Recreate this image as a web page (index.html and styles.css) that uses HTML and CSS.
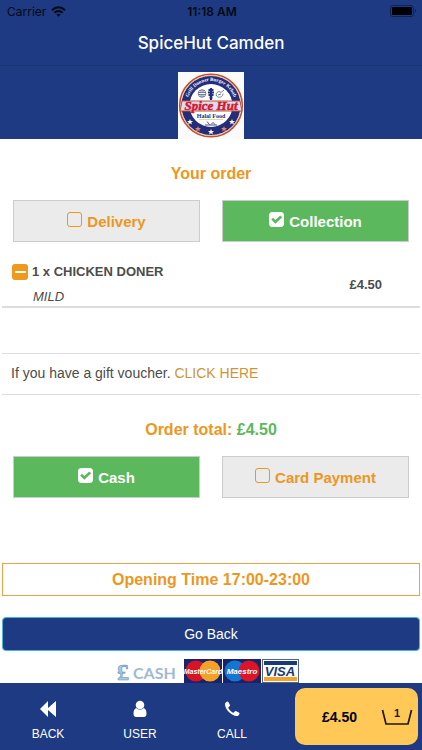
FILE: index.html
```html
<!DOCTYPE html>
<html lang="en">
<head>
    <meta charset="UTF-8">
    <meta name="viewport" content="width=device-width, initial-scale=1.0">
    <title>SpiceHut Camden</title>
    <link rel="stylesheet" href="styles.css">
</head>
<body>
    <!-- Status bar and title -->
    <header class="top-bar">
        <div class="status-bar">
            <span class="carrier">Carrier
                <svg width="15" height="11" viewBox="0 0 15 11" aria-hidden="true">
                    <g fill="none" stroke="#050914" stroke-width="2">
                        <path d="M1 4.2C4.8.4 10.2.4 14 4.2"/>
                        <path d="M3.4 6.8C5.8 4.5 9.2 4.5 11.6 6.8"/>
                    </g>
                    <path d="M5.4 8.6C6.7 7.5 8.3 7.5 9.6 8.6L7.5 10.8Z" fill="#050914"/>
                </svg>
            </span>
            <span class="clock">11:18 AM</span>
            <svg class="battery" width="27" height="12" viewBox="0 0 27 12" aria-hidden="true">
                <rect x=".5" y=".5" width="23" height="11" rx="2.5" fill="none" stroke="#10214d"/>
                <rect x="2" y="2" width="20" height="8" rx="1" fill="#000"/>
                <path d="M25 4C26.5 4.5 26.5 7.5 25 8Z" fill="#10214d"/>
            </svg>
        </div>
        <h1 class="title">SpiceHut Camden</h1>
    </header>

    <div class="banner">
        <svg class="logo" width="66" height="67" viewBox="0 0 66 67" role="img" aria-label="Spice Hut">
            <defs>
                <path id="arc" d="M9 33A24 24 0 0 1 57 33"/>
                <path id="star" d="M0-3L.8-.9 3-.9 1.3.5 1.9 2.6 0 1.3-1.9 2.6-1.3.5-3-.9-.8-.9Z"/>
            </defs>
            <rect width="66" height="67" fill="#fafafa"/>
            <circle cx="33" cy="33.5" r="31.3" fill="#fff" stroke="#c2512f" stroke-width="1.6"/>
            <circle cx="33" cy="33.5" r="30" fill="#232d7c" stroke="#f0c9a8" stroke-width="1"/>
            <circle cx="33" cy="33.5" r="21.5" fill="#fff"/>
            <text class="logo-arc"><textPath href="#arc" startOffset="50%" text-anchor="middle">Grill Donner Burger Kebab</textPath></text>
            <!-- burger, doner, chicken -->
            <g fill="none" stroke="#555a80" stroke-width=".8">
                <circle cx="24" cy="21.5" r="3.8"/>
                <path d="M20.5 20.5h7M20.5 22.5h7M22 19h4M22 24h4"/>
                <path d="M38.5 24C37 20.5 41 18.5 43 20.5L46 18M38.5 24C41 26.5 45 25 45 21.5M40 23l3-1"/>
            </g>
            <path d="M33 16v12M30.5 18h5M30 20.5h6M30.5 23h5M31.5 25.5h3" stroke="#232d7c" stroke-width="2.2"/>
            <path d="M4 29H62L64 39H2Z" fill="#e0daf0" stroke="#c2512f" stroke-width="1"/>
            <text class="logo-name" x="33" y="38" text-anchor="middle">Spice Hut</text>
            <text class="logo-sub" x="33" y="46" text-anchor="middle">Halal Food</text>
            <path d="M21 47.5H45" stroke="#d8d084" stroke-width=".8"/>
            <path d="M27 53H39M29 49.5L31.5 52.5M33 52.5L35 50.5 37 52.5" fill="none" stroke="#333a70" stroke-width=".9"/>
            <g fill="#fff">
                <use href="#star" x="12" y="50"/>
                <use href="#star" x="54" y="50"/>
                <use href="#star" x="33" y="60"/>
            </g>
            <g fill="#e88365">
                <use href="#star" x="20" y="57"/>
                <use href="#star" x="46" y="57"/>
            </g>
        </svg>
    </div>

    <main class="content">
        <h2 class="heading">Your order</h2>
        <div class="choices">
            <label class="choice"><input type="radio" name="service"> Delivery</label>
            <label class="choice"><input type="radio" name="service" checked> Collection</label>
        </div>

        <!-- Ordered items -->
        <div class="item">
            <button class="remove" aria-label="Remove CHICKEN DONER"></button>
            <div class="item-text">
                <div class="item-name">1 x CHICKEN DONER</div>
                <div class="item-note">MILD</div>
            </div>
            <div class="item-price">£4.50</div>
        </div>

        <p class="voucher">If you have a gift voucher. <a href="#voucher">CLICK HERE</a></p>

        <h2 class="heading">Order total: <span class="amount">£4.50</span></h2>
        <div class="choices">
            <label class="choice"><input type="radio" name="payment" checked> Cash</label>
            <label class="choice"><input type="radio" name="payment"> Card Payment</label>
        </div>

        <div class="opening">Opening Time 17:00-23:00</div>
        <button class="go-back">Go Back</button>

        <!-- Accepted payments -->
        <div class="payments">
            <svg width="64" height="24" viewBox="0 0 64 24" role="img" aria-label="Cash">
                <text class="pound" x="1" y="21">£</text>
                <text class="cash" x="17" y="20">CASH</text>
            </svg>
            <svg width="38" height="24" viewBox="0 0 38 24" role="img" aria-label="MasterCard">
                <rect width="38" height="24" fill="#17246b"/>
                <circle cx="12" cy="12" r="10.5" fill="#d5142a"/>
                <circle cx="26" cy="12" r="10.5" fill="#f7a028"/>
                <text class="card-name" x="19" y="15" text-anchor="middle">MasterCard</text>
            </svg>
            <svg width="38" height="24" viewBox="0 0 38 24" role="img" aria-label="Maestro">
                <rect width="38" height="24" fill="#17246b"/>
                <circle cx="12" cy="12" r="10.5" fill="#1377d2"/>
                <circle cx="26" cy="12" r="10.5" fill="#dc1428"/>
                <text class="card-name maestro" x="19" y="15" text-anchor="middle">Maestro</text>
            </svg>
            <svg width="37" height="24" viewBox="0 0 37 24" role="img" aria-label="VISA">
                <rect x=".5" y=".5" width="36" height="23" fill="#fff" stroke="#526383"/>
                <rect x="2" y="2" width="33" height="4" fill="#183a78"/>
                <rect x="2" y="18" width="33" height="4" fill="#f4a22c"/>
                <text class="visa" x="18" y="17" text-anchor="middle">VISA</text>
            </svg>
        </div>
    </main>

    <!-- Bottom navigation -->
    <nav class="bottom-bar">
        <a class="nav-link" href="#back">
            <svg width="18" height="18" viewBox="0 0 18 18" fill="#fff" aria-hidden="true"><path d="M1 9L9 1V8L17 1V17L9 10V17Z"/></svg>
            BACK
        </a>
        <a class="nav-link" href="#user">
            <svg width="18" height="18" viewBox="0 0 18 18" fill="#fff" aria-hidden="true">
                <circle cx="9" cy="5" r="4.3"/>
                <path d="M5.3 8C7.3 10.2 10.7 10.2 12.7 8C15 8.8 15.5 11.5 15.5 14C15.5 16 14.5 17 12.8 17H5.2C3.5 17 2.5 16 2.5 14C2.5 11.5 3 8.8 5.3 8Z"/>
            </svg>
            USER
        </a>
        <a class="nav-link" href="#call">
            <svg width="18" height="18" viewBox="0 0 18 18" fill="#fff" aria-hidden="true">
                <path d="M2 4.3C2 2.7 3.2 1.8 4.6 1.5C5.2 1.4 5.5 2 7 5.2C7.3 6.2 5.4 6.8 5.3 7.7C5.6 9.2 8.8 12.4 10.3 12.7C11.2 12.7 11.9 10.7 12.8 11C16 12.5 16.6 12.9 16.5 13.4C16.3 14.9 15.3 16 13.7 16C8.5 16 2 9.5 2 4.3Z"/>
            </svg>
            CALL
        </a>
        <button class="basket">
            <span>£4.50</span>
            <svg width="32" height="22" viewBox="0 0 32 22" aria-hidden="true">
                <path d="M1.5 4L5 18H27L30.5 4" fill="none" stroke="#201805" stroke-width="1.7"/>
                <text class="count" x="16" y="11" text-anchor="middle">1</text>
            </svg>
        </button>
    </nav>
</body>
</html>
```
FILE: styles.css
```css
* {
    box-sizing: border-box;
}

body {
    font-family: "Liberation Sans", Arial, sans-serif;
    font-size: 14px;
    background-color: #fff;
    color: #4c4c4c;
    margin: 0;
    min-height: 100vh;
    display: flex;
    flex-direction: column;
}

button {
    font-family: inherit;
    cursor: pointer;
}

/* Top bar */
.top-bar {
    background-color: #1d3a82;
    border-bottom: 1px solid #1a3475;
    height: 66px;
    font-family: Inter, sans-serif;
}

.status-bar {
    display: grid;
    grid-template-columns: 1fr auto 1fr;
    align-items: center;
    height: 22px;
    padding: 0 5px 0 7px;
    color: #050914;
    font-size: 12px;
}

.carrier {
    display: flex;
    align-items: center;
    gap: 5px;
}

.clock {
    font-weight: 600;
}

.battery {
    justify-self: end;
}

.title {
    margin: 0;
    color: #fff;
    font-size: 17px;
    font-weight: 500;
    line-height: 42px;
    text-align: center;
}

.banner {
    background-color: #1d3a82;
    padding-top: 6px;
    display: flex;
    justify-content: center;
}

.logo-arc {
    font: bold 5px "Liberation Serif", serif;
    fill: #fff;
}

.logo-name {
    font: italic bold 13px "Liberation Serif", serif;
    fill: #d3182e;
    stroke: #d3182e;
    stroke-width: 0.5px;
}

.logo-sub {
    font: bold 6px "Liberation Serif", serif;
    fill: #232d7c;
}

/* Order */
.content {
    flex: 1;
    padding: 0 2px;
}

.heading {
    margin: 24px 0 15px;
    color: #ec971f;
    font-size: 16px;
    line-height: 22px;
    text-align: center;
}

.amount {
    color: #5cb85c;
}

.choices {
    display: grid;
    grid-template-columns: 1fr 1fr;
    gap: 22px;
    padding: 0 11px;
}

.choice {
    display: flex;
    align-items: center;
    justify-content: center;
    gap: 5px;
    height: 42px;
    border: 1px solid #ccc;
    background-color: #ebebeb;
    color: #ec971f;
    font-size: 15px;
    font-weight: bold;
    cursor: pointer;
}

.choice input {
    appearance: none;
    width: 15px;
    height: 15px;
    margin: 0 0 3px;
    border: 1px solid #ec971f;
    border-radius: 3px;
}

.choice:has(input:checked) {
    background-color: #5cb85c;
    color: #fff;
}

.choice input:checked {
    display: grid;
    place-items: center;
    border-color: #fff;
    background-color: #fff;
}

.choice input:checked::before {
    content: "";
    width: 11px;
    height: 9px;
    background-color: #5cb85c;
    clip-path: polygon(0 50%, 18% 30%, 38% 55%, 82% 5%, 100% 24%, 38% 96%);
}

.item {
    display: flex;
    margin-top: 17px;
    padding: 4px 38px 0 10px;
    height: 49px;
    border-bottom: 2px solid #ddd;
}

.remove {
    display: flex;
    align-items: center;
    justify-content: center;
    width: 16px;
    height: 16px;
    margin: 1px 4px 0 0;
    padding: 0;
    border: none;
    border-radius: 3px;
    background-color: #f0981c;
}

.remove::before {
    content: "";
    width: 11px;
    height: 2px;
    background-color: #fff;
}

.item-text {
    flex: 1;
    font-size: 13px;
    line-height: 18px;
}

.item-name,
.item-price {
    font-size: 13px;
    font-weight: bold;
}

.item-note {
    margin-top: 7px;
    padding-left: 1px;
    font-style: italic;
}

.item-price {
    align-self: center;
}

.voucher {
    margin: 45px 0 0;
    padding: 0 9px 2px;
    border-top: 1px solid #ddd;
    border-bottom: 1px solid #ddd;
    font-size: 14px;
    line-height: 38px;
}

.voucher a {
    color: #cc9537;
    text-decoration: none;
}

.opening {
    margin-top: 65px;
    border: 1px solid #eba345;
    color: #ec971f;
    font-size: 16px;
    font-weight: bold;
    line-height: 31px;
    text-align: center;
}

.go-back {
    display: block;
    width: 100%;
    height: 34px;
    margin-top: 21px;
    border: 1px solid #46b8da;
    border-radius: 4px;
    background-color: #1d3a82;
    color: #fff;
    font-size: 14px;
}

.payments {
    display: flex;
    justify-content: center;
    gap: 1px;
    padding: 8px 8px 0 0;
}

.payments svg:first-child {
    margin-right: 3px;
}

.pound {
    font: bold 24px "Liberation Serif", serif;
    fill: #a9c8e2;
    stroke: #6d92b5;
    stroke-width: 0.6px;
}

.cash {
    font: bold 16px Lato, sans-serif;
    fill: #a1bad2;
}

.card-name {
    font: italic bold 7px "Liberation Sans", sans-serif;
    fill: #fff;
}

.maestro {
    font-size: 8px;
}

.visa {
    font: italic bold 13px "Liberation Sans", sans-serif;
    fill: #183a78;
}

/* Bottom bar */
.bottom-bar {
    position: sticky;
    bottom: 0;
    display: flex;
    height: 67px;
    padding: 5px 4px 5px 2px;
    background-color: #1d3a82;
}

.nav-link {
    flex: 1;
    display: flex;
    flex-direction: column;
    align-items: center;
    gap: 9px;
    padding-top: 12px;
    color: #fff;
    font-size: 12px;
    line-height: 14px;
    text-decoration: none;
}

.basket {
    display: flex;
    align-items: center;
    justify-content: space-between;
    width: 123px;
    margin-left: 17px;
    padding: 0 5px 0 27px;
    border: none;
    border-radius: 10px;
    background-color: #ffc857;
    color: #000;
    font-size: 14px;
    font-weight: bold;
}

.count {
    font: bold 11px "Liberation Sans", sans-serif;
    fill: #201805;
}
```
